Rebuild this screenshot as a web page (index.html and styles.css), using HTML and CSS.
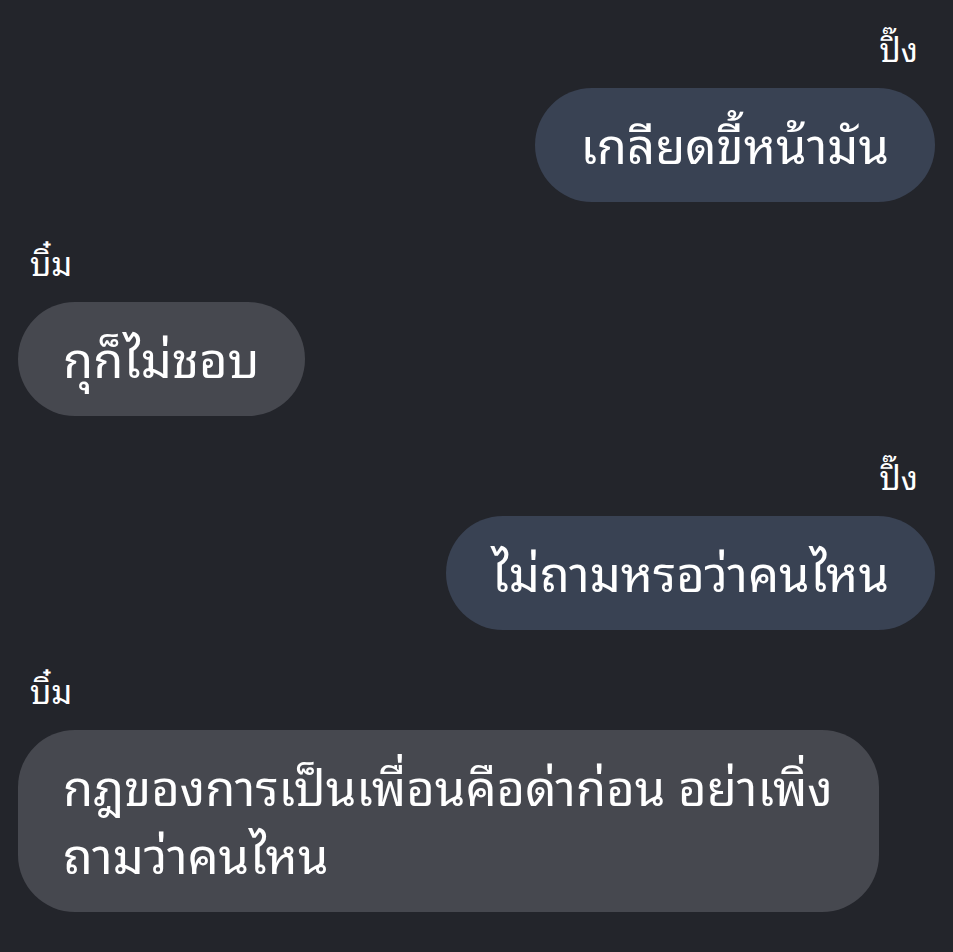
FILE: index.html
```html
<!DOCTYPE html>
<html lang="th">
<head>
	<meta charset="utf-8">
	<title>แชท</title>
	<link rel="stylesheet" href="styles.css">
</head>
<body>
<div class="chat">
	<div class="msg msg-me">
		<div class="msg-name">ปิ๊ง</div>
		<div class="msg-bubble">เกลียดขี้หน้ามัน</div>
	</div>
	<div class="msg msg-them">
		<div class="msg-name">บิ๋ม</div>
		<div class="msg-bubble">กุก็ไม่ชอบ</div>
	</div>
	<div class="msg msg-me">
		<div class="msg-name">ปิ๊ง</div>
		<div class="msg-bubble">ไม่ถามหรอว่าคนไหน</div>
	</div>
	<div class="msg msg-them">
		<div class="msg-name">บิ๋ม</div>
		<div class="msg-bubble">กฎของการเป็นเพื่อนคือด่าก่อน อย่าเพิ่ง<br>ถามว่าคนไหน</div>
	</div>
</div>
</body>
</html>
```

FILE: styles.css
```css
html, body {margin: 0; padding: 0; background: #23252b;}
body {font-family: "Noto Sans Thai Looped", "Loma", "Garuda", "Noto Sans Thai", "Noto Sans", sans-serif; color: #fff;}

.chat {display: flex; flex-direction: column; gap: 40px; padding: 28px 18px 30px 18px;}

.msg {display: flex; flex-direction: column; gap: 20px;}
.msg-me {align-items: flex-end;}
.msg-them {align-items: flex-start;}

.msg-name {height: 40px; line-height: 40px; font-size: 33px;}
.msg-me .msg-name {padding-right: 17px;}
.msg-them .msg-name {padding-left: 12px;}

.msg-bubble {max-width: 862px; box-sizing: border-box; padding: 20px 46px 26px 45px; font-size: 49px; line-height: 68px; border-radius: 57px;}
.msg-me .msg-bubble {background: #394253;}
.msg-them .msg-bubble {background: #46484f;}
```
